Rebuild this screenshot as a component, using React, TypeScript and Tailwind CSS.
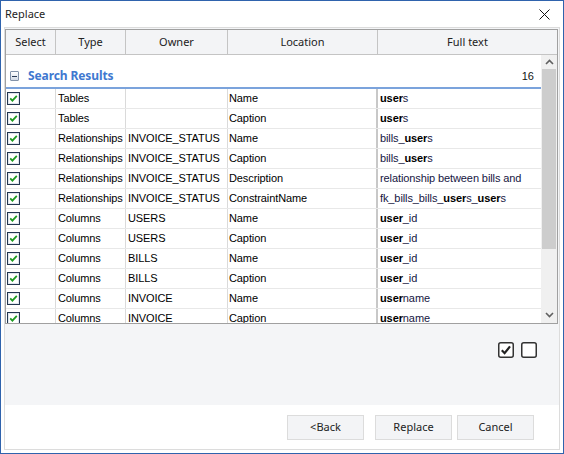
import React from "react";

type Row = { type: string; owner: string; loc: string; text: string };

// full text: segments between * are bold (the matched search term)
const rows: Row[] = [
  { type: "Tables", owner: "", loc: "Name", text: "*user*s" },
  { type: "Tables", owner: "", loc: "Caption", text: "*user*s" },
  { type: "Relationships", owner: "INVOICE_STATUS", loc: "Name", text: "bills_*user*s" },
  { type: "Relationships", owner: "INVOICE_STATUS", loc: "Caption", text: "bills_*user*s" },
  { type: "Relationships", owner: "INVOICE_STATUS", loc: "Description", text: "relationship between bills and" },
  { type: "Relationships", owner: "INVOICE_STATUS", loc: "ConstraintName", text: "fk_bills_bills_*user*s_*user*s" },
  { type: "Columns", owner: "USERS", loc: "Name", text: "*user*_id" },
  { type: "Columns", owner: "USERS", loc: "Caption", text: "*user*_id" },
  { type: "Columns", owner: "BILLS", loc: "Name", text: "*user*_id" },
  { type: "Columns", owner: "BILLS", loc: "Caption", text: "*user*_id" },
  { type: "Columns", owner: "INVOICE", loc: "Name", text: "*user*name" },
  { type: "Columns", owner: "INVOICE", loc: "Caption", text: "*user*name" },
];

function FullText({ text }: { text: string }) {
  const parts = text.split("*");
  return (
    <span className="whitespace-nowrap">
      {parts.map((p, i) =>
        i % 2 === 1 ? (
          <b key={i} className="font-bold text-black">
            {p}
          </b>
        ) : (
          <span key={i}>{p}</span>
        )
      )}
    </span>
  );
}

function GridCheck() {
  return (
    <svg width="13" height="13" viewBox="0 0 13 13">
      <rect x="0.5" y="0.5" width="12" height="12" fill="#fff" stroke="#22364f" />
      <rect x="1.5" y="1.5" width="10" height="10" fill="none" stroke="#dfe6ee" />
      <path d="M3.2 6.3 L5.4 8.6 L9.8 3.9" fill="none" stroke="#1f9c24" strokeWidth="1.8" />
    </svg>
  );
}

function BoxCheck({ checked }: { checked?: boolean }) {
  return (
    <svg width="16" height="16" viewBox="0 0 16 16">
      <rect x="0.75" y="0.75" width="14.5" height="14.5" rx="2" fill="#fff" stroke="#333" strokeWidth="1.5" />
      {checked && <path d="M3.8 8.3 L6.6 11.2 L12 4.4" fill="none" stroke="#222" strokeWidth="2.2" />}
    </svg>
  );
}

function Chevron({ up }: { up?: boolean }) {
  return (
    <svg width="9" height="6" viewBox="0 0 9 6">
      <path d={up ? "M1 5 L4.5 1.5 L8 5" : "M1 1 L4.5 4.5 L8 1"} fill="none" stroke="#606060" strokeWidth="1.6" />
    </svg>
  );
}

const cell = "h-full flex items-center overflow-hidden border-r border-[#dadada]";

export default function App() {
  return (
    <div className="w-[564px] h-[454px] border border-[#2f63ad] bg-white flex flex-col font-['Noto_Sans',sans-serif] text-[#1e1e1e]">
      {/* title bar */}
      <div className="h-[26px] flex items-center justify-between pl-[4px] pr-[13px]">
        <span className="text-[11px]">Replace</span>
        <svg width="11" height="11" viewBox="0 0 11 11">
          <path d="M0.5 0.5 L10.5 10.5 M10.5 0.5 L0.5 10.5" stroke="#111" strokeWidth="1" />
        </svg>
      </div>

      <div className="flex-1 mx-[3px] mb-[3px] border border-[#dcdcdc] flex flex-col">
        <div className="h-[377px] bg-[#f4f5f7] flex flex-col pt-[1px] pr-[1px]">
          {/* grid */}
          <div className="h-[295px] border border-[#a0a0a0] bg-white flex flex-col overflow-hidden">
            <div className="h-[25px] shrink-0 flex bg-[#f3f4f6] border-b border-[#c4c4c4] text-[11px] text-[#222]">
              <div className="w-[50px] h-full flex items-center justify-center pt-[1px] border-r border-[#c4c4c4]">Select</div>
              <div className="w-[70px] h-full flex items-center justify-center pt-[1px] border-r border-[#c4c4c4]">Type</div>
              <div className="w-[102px] h-full flex items-center justify-center pt-[1px] border-r border-[#c4c4c4]">Owner</div>
              <div className="w-[150px] h-full flex items-center justify-center pt-[1px] border-r border-[#c4c4c4]">Location</div>
              <div className="flex-1 h-full flex items-center justify-center pt-[1px]">Full text</div>
            </div>

            <div className="flex-1 flex overflow-hidden">
              <div className="flex-1 flex flex-col overflow-hidden">
                <div className="h-[32px] shrink-0 pt-[10px] pl-[4px] pr-[7px]">
                  <div className="h-[22px] flex items-center">
                    <div className="w-[9px] h-[10px] rounded-[1px] border border-[#8393aa] bg-gradient-to-b from-white to-[#d3dbe7] flex items-center justify-center">
                      <div className="w-[5px] h-[1px] bg-[#2a3b55]" />
                    </div>
                    <span className="ml-[9px] text-[12px] font-bold text-[#4078d0] tracking-[-0.1px]">Search Results</span>
                    <span className="ml-auto text-[11px] text-[#111] font-['Liberation_Sans',sans-serif]">16</span>
                  </div>
                </div>
                <div className="h-[2px] shrink-0 bg-[#7ba3dc]" />
                {rows.map((r, i) => (
                  <div
                    key={i}
                    className="h-[20px] shrink-0 flex border-b border-[#e8e8e8] font-['Liberation_Sans',sans-serif] text-[11px] tracking-[-0.1px] text-[#000]"
                  >
                    <div className="w-[50px] h-full flex items-start pt-[3px] pl-[1px] border-r border-[#dadada]">
                      <GridCheck />
                    </div>
                    <div className={`w-[70px] pl-[2px] ${cell}`}>{r.type}</div>
                    <div className={`w-[102px] pl-[2px] ${cell}`}>{r.owner}</div>
                    <div className="w-[150px] h-full flex items-center pl-[1px] overflow-hidden border-r-2 border-[#c8c8c8]">{r.loc}</div>
                    <div className="flex-1 h-full flex items-start pt-[1px] pl-[2px] overflow-hidden text-[#16163f]">
                      <FullText text={r.text} />
                    </div>
                  </div>
                ))}
              </div>

              {/* scrollbar */}
              <div className="w-[16px] shrink-0 bg-[#f0f0f0] flex flex-col">
                <div className="h-[14px] flex items-center justify-center">
                  <Chevron up />
                </div>
                <div className="h-[180px] mx-[1px] bg-[#cdcdcd]" />
                <div className="flex-1" />
                <div className="h-[16px] flex items-center justify-center">
                  <Chevron />
                </div>
              </div>
            </div>
          </div>

          <div className="mt-[18px] flex justify-end gap-[7px] pr-[21px]">
            <BoxCheck checked />
            <BoxCheck />
          </div>
        </div>

        <div className="flex-1 flex items-start justify-end pt-[10px] pr-[25px] text-[11px] text-[#222]">
          <button className="w-[77px] h-[25px] bg-[#f3f4f6] border border-[#dcdcdc]">&lt;Back</button>
          <button className="ml-[11px] w-[77px] h-[25px] bg-[#f3f4f6] border border-[#dcdcdc]">Replace</button>
          <button className="ml-[5px] w-[77px] h-[25px] bg-[#f3f4f6] border border-[#dcdcdc]">Cancel</button>
        </div>
      </div>
    </div>
  );
}
